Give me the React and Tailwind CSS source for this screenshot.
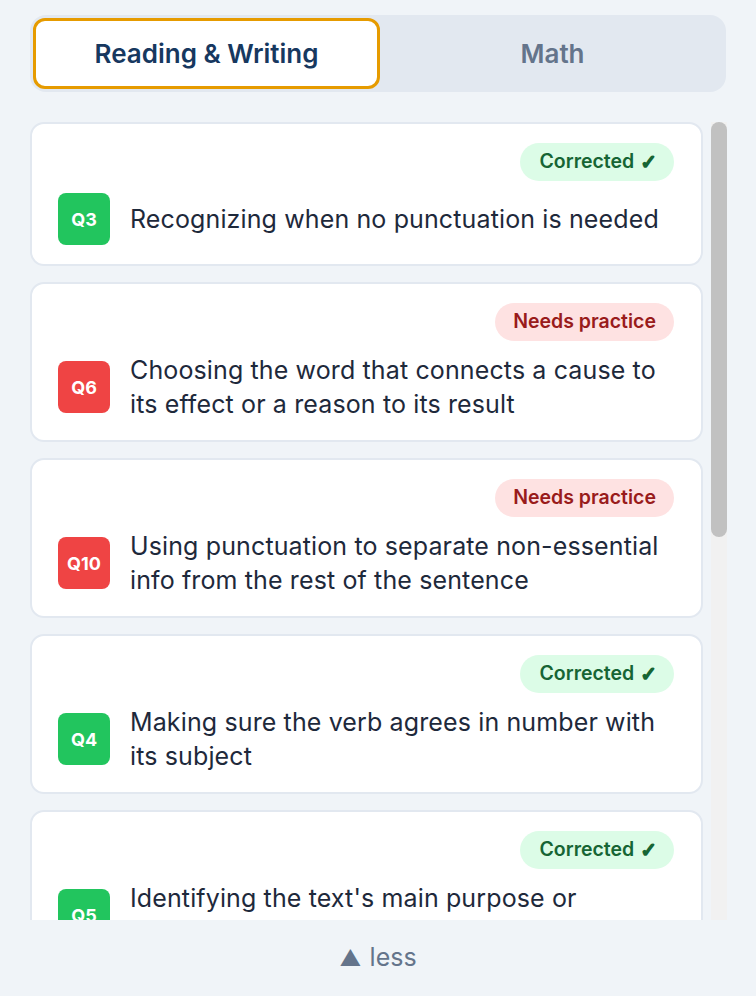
import { useState } from 'react'

const ITEMS = [
  { q: 'Q3', ok: true, text: 'Recognizing when no punctuation is needed' },
  { q: 'Q6', ok: false, text: 'Choosing the word that connects a cause to its effect or a reason to its result' },
  { q: 'Q10', ok: false, text: 'Using punctuation to separate non-essential info from the rest of the sentence' },
  { q: 'Q4', ok: true, text: 'Making sure the verb agrees in number with its subject' },
  { q: 'Q5', ok: true, text: "Identifying the text's main purpose or function in context" },
]

function Card({ item }) {
  return (
    <div className="shrink-0 bg-white border-2 border-[#e2e8f0] rounded-[14px] pl-[26px] pr-[27px] pt-[19px] pb-[19px]">
      <div className="flex justify-end">
        {item.ok ? (
          <span className="h-[38px] pl-[19px] pr-[17px] rounded-full bg-[#dcfce7] text-[#166534] text-[19.5px] font-semibold flex items-center gap-[6px]">
            Corrected <span className="font-['DejaVu_Sans'] text-[20px] leading-none [-webkit-text-stroke:1.6px_currentColor]">✓</span>
          </span>
        ) : (
          <span className="h-[38px] px-[18px] rounded-full bg-[#fee2e2] text-[#991b1b] text-[19.5px] font-semibold flex items-center">Needs practice</span>
        )}
      </div>
      <div className="mt-[12px] flex items-center gap-[20px]">
        <div className={`w-[52px] h-[52px] shrink-0 rounded-[8px] flex items-center justify-center text-white text-[18px] font-bold ${item.ok ? 'bg-[#22c55e]' : 'bg-[#ef4444]'}`}>
          {item.q}
        </div>
        <p className="text-[25px] leading-[34px] tracking-[0.005em] text-[#1e293b]">{item.text}</p>
      </div>
    </div>
  )
}

export default function App() {
  const [tab, setTab] = useState('rw')

  return (
    <div className="w-[756px] h-[996px] bg-[#f0f4f8] flex flex-col" style={{ fontFamily: 'Inter, "Noto Sans", sans-serif' }}>
      <div className="px-[30px] pt-[15px]">
        <div className="h-[77px] bg-[#e2e8f0] rounded-[16px] flex p-[3px] gap-[2px]">
          <button
            onClick={() => setTab('rw')}
            className={`flex-1 rounded-[12px] text-[26px] font-semibold ${tab === 'rw' ? 'bg-white border-[3px] border-[#e69b00] text-[#17385f]' : 'text-[#64748b]'}`}
          >
            Reading &amp; Writing
          </button>
          <button
            onClick={() => setTab('math')}
            className={`flex-1 rounded-[12px] text-[26px] font-semibold ${tab === 'math' ? 'bg-white border-[3px] border-[#e69b00] text-[#17385f]' : 'text-[#64748b]'}`}
          >
            Math
          </button>
        </div>
      </div>

      <div className="mt-[30px] ml-[30px] mr-[29px] h-[798px] flex gap-[8px]">
        <div className="flex-1 overflow-hidden flex flex-col gap-[16px]">
          {ITEMS.map((item) => (
            <Card key={item.q} item={item} />
          ))}
        </div>
        <div className="w-[16px] bg-[#f1f1f1] flex flex-col">
          <div className="h-[415px] bg-[#c1c1c1] rounded-full" />
        </div>
      </div>

      <div className="flex-1 flex items-center justify-center">
        <button className="text-[25px] text-[#64748b] flex items-center gap-[8px]">
          <span className="text-[22px]">▲</span>
          <span>less</span>
        </button>
      </div>
    </div>
  )
}
